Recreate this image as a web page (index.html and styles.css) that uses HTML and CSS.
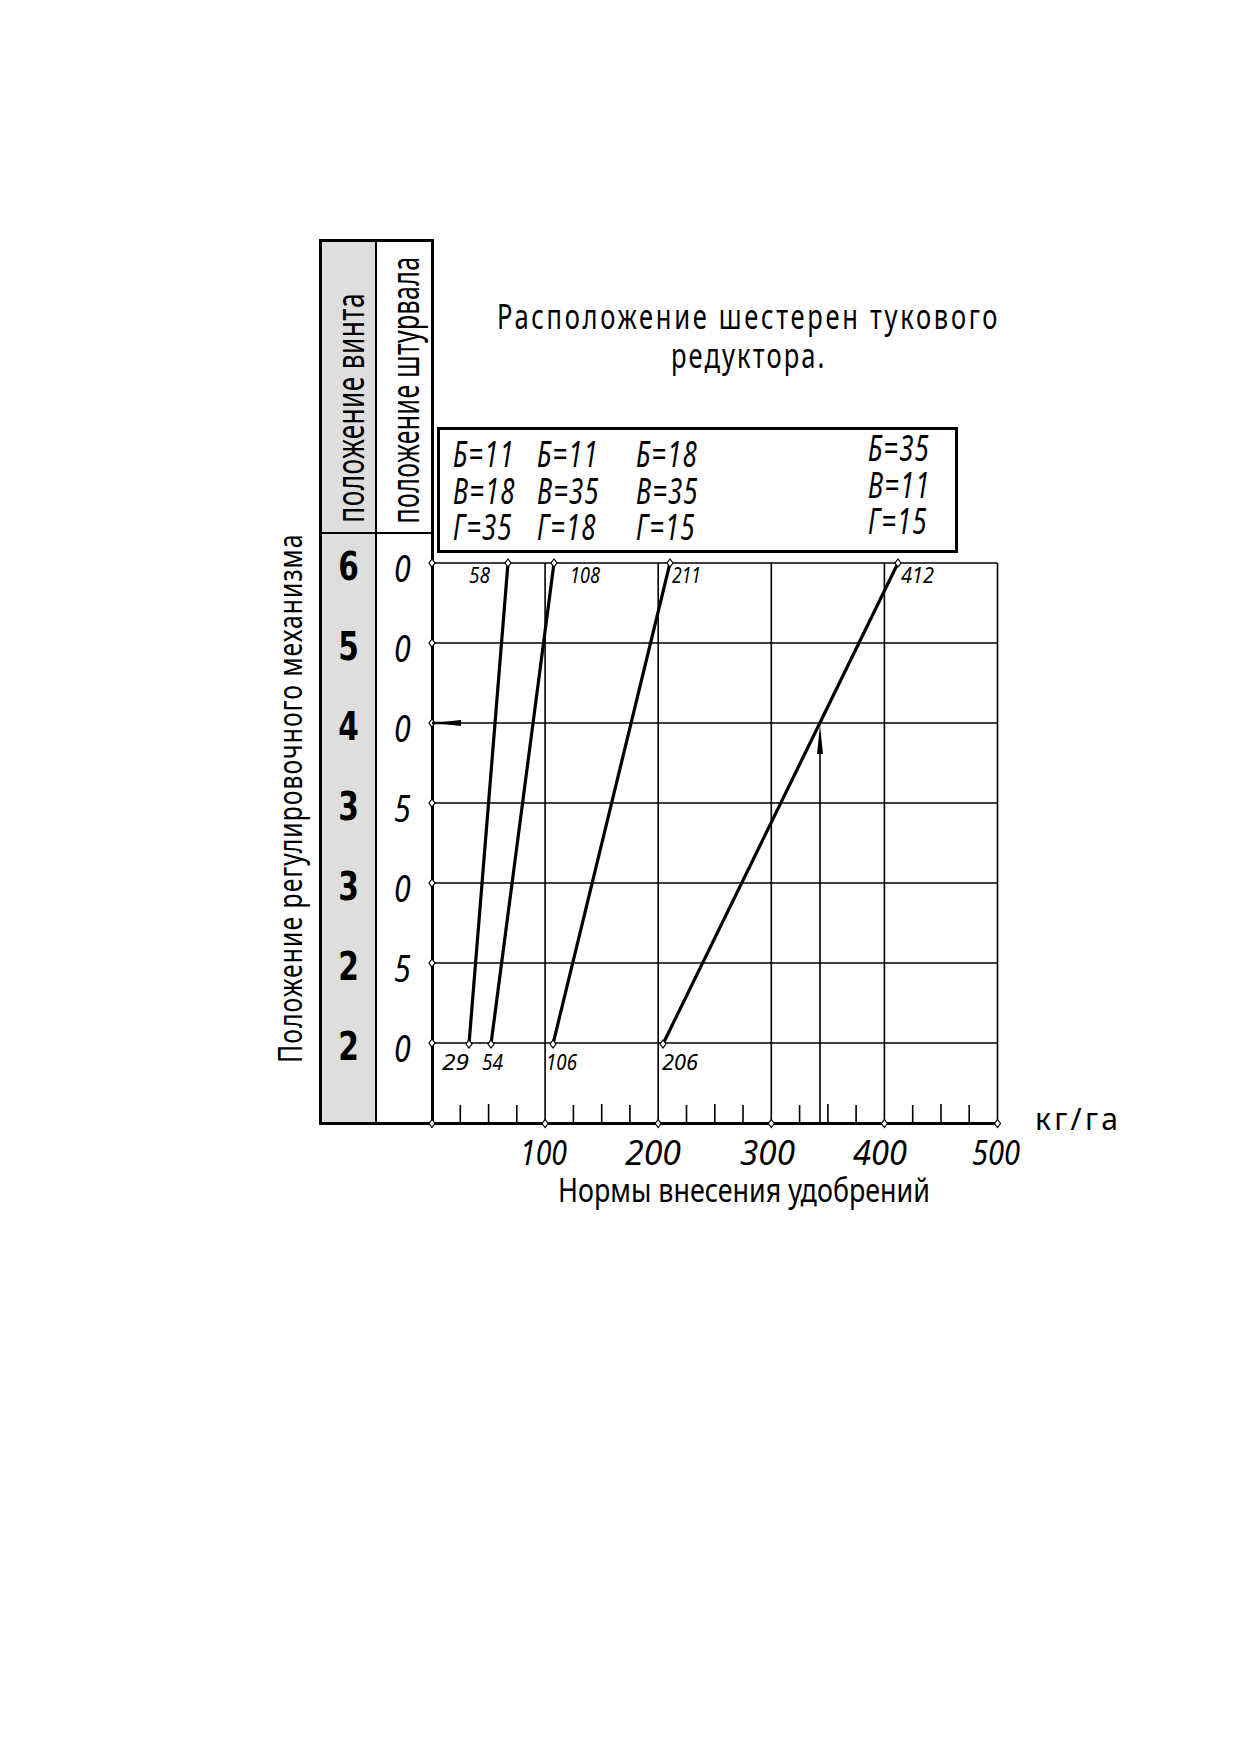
FILE: index.html
```html
<!DOCTYPE html>
<html lang="ru">
<head>
<meta charset="utf-8">
<title>Нормы внесения удобрений</title>
<link rel="stylesheet" href="styles.css">
</head>
<body>
<div class="figure">
  <div class="side"><span class="side-label"><span class="squeeze">Положение регулировочного механизма</span></span></div>
  <div class="table">
    <div class="col col-screw">
      <div class="head"><span class="vlabel"><span class="squeeze">положение винта</span></span></div>
      <div class="body">
        <div class="cell"><span>6</span></div>
        <div class="cell"><span>5</span></div>
        <div class="cell"><span>4</span></div>
        <div class="cell"><span>3</span></div>
        <div class="cell"><span>3</span></div>
        <div class="cell"><span>2</span></div>
        <div class="cell"><span>2</span></div>
      </div>
    </div>
    <div class="col col-wheel">
      <div class="head"><span class="vlabel"><span class="squeeze">положение штурвала</span></span></div>
      <div class="body">
        <div class="cell"><span>0</span></div>
        <div class="cell"><span>0</span></div>
        <div class="cell"><span>0</span></div>
        <div class="cell"><span>5</span></div>
        <div class="cell"><span>0</span></div>
        <div class="cell"><span>5</span></div>
        <div class="cell"><span>0</span></div>
      </div>
    </div>
  </div>
  <div class="chart">
    <div class="title">
      <div class="t1"><span>Расположение шестерен тукового</span></div>
      <div class="t2"><span>редуктора.</span></div>
    </div>
    <div class="gears">
      <div class="gcol g1"><div>Б=11</div><div>В=18</div><div>Г=35</div></div>
      <div class="gcol g2"><div>Б=11</div><div>В=35</div><div>Г=18</div></div>
      <div class="gcol g3"><div>Б=18</div><div>В=35</div><div>Г=15</div></div>
      <div class="gcol g4"><div>Б=35</div><div>В=11</div><div>Г=15</div></div>
    </div>
    <svg class="plot" width="700" height="670" viewBox="0 0 700 670" overflow="visible">
      <g class="grid">
        <line x1="-2" y1="10" x2="563.5" y2="10"/>
        <line x1="-2" y1="90" x2="563.5" y2="90"/>
        <line x1="-2" y1="170" x2="563.5" y2="170"/>
        <line x1="-2" y1="250" x2="563.5" y2="250"/>
        <line x1="-2" y1="330" x2="563.5" y2="330"/>
        <line x1="-2" y1="410" x2="563.5" y2="410"/>
        <line x1="-2" y1="490" x2="563.5" y2="490"/>
        <line x1="111.1" y1="10" x2="111.1" y2="570"/>
        <line x1="224.2" y1="10" x2="224.2" y2="570"/>
        <line x1="337.3" y1="10" x2="337.3" y2="570"/>
        <line x1="450.4" y1="10" x2="450.4" y2="570"/>
        <line x1="563.5" y1="10" x2="563.5" y2="570"/>
      </g>
      <g class="ticks">
        <line x1="26.3" y1="552" x2="26.3" y2="570"/>
        <line x1="54.6" y1="551" x2="54.6" y2="570"/>
        <line x1="82.8" y1="552" x2="82.8" y2="570"/>
        <line x1="139.4" y1="552" x2="139.4" y2="570"/>
        <line x1="167.7" y1="551" x2="167.7" y2="570"/>
        <line x1="195.9" y1="552" x2="195.9" y2="570"/>
        <line x1="252.5" y1="552" x2="252.5" y2="570"/>
        <line x1="280.8" y1="551" x2="280.8" y2="570"/>
        <line x1="309.0" y1="552" x2="309.0" y2="570"/>
        <line x1="365.6" y1="552" x2="365.6" y2="570"/>
        <line x1="393.9" y1="551" x2="393.9" y2="570"/>
        <line x1="422.1" y1="552" x2="422.1" y2="570"/>
        <line x1="478.7" y1="552" x2="478.7" y2="570"/>
        <line x1="507.0" y1="551" x2="507.0" y2="570"/>
        <line x1="535.2" y1="552" x2="535.2" y2="570"/>
      </g>
      <line class="axis" x1="-2" y1="570.5" x2="565" y2="570.5"/>
      <g class="rates">
        <line x1="74" y1="10" x2="35" y2="491"/>
        <line x1="120" y1="10" x2="57" y2="491"/>
        <line x1="236" y1="10" x2="119" y2="491"/>
        <line x1="464" y1="10" x2="229" y2="491"/>
      </g>
      <g class="marks">
        <path d="M-2 6l3 4l-3 4l-3-4z"/>
        <path d="M-2 86l3 4l-3 4l-3-4z"/>
        <path d="M-2 166l3 4l-3 4l-3-4z"/>
        <path d="M-2 246l3 4l-3 4l-3-4z"/>
        <path d="M-2 326l3 4l-3 4l-3-4z"/>
        <path d="M-2 406l3 4l-3 4l-3-4z"/>
        <path d="M-2 486l3 4l-3 4l-3-4z"/>
        <path d="M-2 566.5l3 4l-3 4l-3-4z"/>
        <path d="M111.1 566.5l3 4l-3 4l-3-4z"/>
        <path d="M224.2 566.5l3 4l-3 4l-3-4z"/>
        <path d="M337.3 566.5l3 4l-3 4l-3-4z"/>
        <path d="M450.4 566.5l3 4l-3 4l-3-4z"/>
        <path d="M563.5 566.5l3 4l-3 4l-3-4z"/>
        <path d="M74 6l3 4l-3 4l-3-4z"/>
        <path d="M120 6l3 4l-3 4l-3-4z"/>
        <path d="M236 6l3 4l-3 4l-3-4z"/>
        <path d="M464 6l3 4l-3 4l-3-4z"/>
        <path d="M35 487l3 4l-3 4l-3-4z"/>
        <path d="M57 487l3 4l-3 4l-3-4z"/>
        <path d="M119 487l3 4l-3 4l-3-4z"/>
        <path d="M229 487l3 4l-3 4l-3-4z"/>
      </g>
      <g class="reading">
        <line x1="386" y1="570" x2="386" y2="180"/>
        <polygon points="386,172 383,201 389,201"/>
        <line x1="-2" y1="170" x2="24" y2="170" class="shaft"/>
        <polygon points="-1,170 27,167 27,173"/>
      </g>
      <g class="val">
        <text x="35" y="30" textLength="21" lengthAdjust="spacingAndGlyphs">58</text>
        <text x="136" y="30" textLength="30" lengthAdjust="spacingAndGlyphs">108</text>
        <text x="238" y="30" textLength="29" lengthAdjust="spacingAndGlyphs">211</text>
        <text x="467" y="30" textLength="33" lengthAdjust="spacingAndGlyphs">412</text>
        <text x="8" y="517" textLength="27" lengthAdjust="spacingAndGlyphs">29</text>
        <text x="48" y="517" textLength="21" lengthAdjust="spacingAndGlyphs">54</text>
        <text x="112" y="517" textLength="31" lengthAdjust="spacingAndGlyphs">106</text>
        <text x="228" y="517" textLength="36" lengthAdjust="spacingAndGlyphs">206</text>
      </g>
      <g class="scale">
        <text x="86" y="612" textLength="47" lengthAdjust="spacingAndGlyphs">100</text>
        <text x="191" y="612" textLength="56" lengthAdjust="spacingAndGlyphs">200</text>
        <text x="306" y="612" textLength="55" lengthAdjust="spacingAndGlyphs">300</text>
        <text x="419" y="612" textLength="54" lengthAdjust="spacingAndGlyphs">400</text>
        <text x="538" y="612" textLength="48" lengthAdjust="spacingAndGlyphs">500</text>
      </g>
      <text class="unit" x="601" y="577" textLength="83" lengthAdjust="spacing">кг/га</text>
      <text class="axis-title" x="124" y="649" textLength="372" lengthAdjust="spacingAndGlyphs">Нормы внесения удобрений</text>
    </svg>
  </div>
</div>
</body>
</html>
```

FILE: styles.css
```css
html, body {
  margin: 0;
  padding: 0;
  background: #ffffff;
}

body {
  color: #000;
  font-family: "Noto Sans", "Open Sans", "DejaVu Sans", sans-serif;
  font-weight: 400;
}

.figure {
  display: flex;
  align-items: flex-start;
  margin: 239px 0 0 269px;
}

/* rotated axis caption left of the table */
.side {
  width: 50px;
  height: 886px;
  box-sizing: border-box;
  display: flex;
  justify-content: center;
  align-items: flex-end;
  padding: 0 9px 62px 0;
}

.side-label,
.vlabel {
  writing-mode: vertical-rl;
  transform: rotate(180deg);
  white-space: nowrap;
}

.squeeze {
  display: inline-block;
  transform-origin: 50% 0;
}

.side-label {
  font-size: 33px;
  line-height: 34px;
  letter-spacing: 1.4px;
}

.side-label .squeeze {
  transform: scaleY(0.75);
}

/* table of screw / wheel positions */
.table {
  display: flex;
  height: 886px;
  box-sizing: border-box;
  border: 3px solid #000;
}

.col {
  display: flex;
  flex-direction: column;
}

.col-screw {
  width: 55px;
  box-sizing: border-box;
  border-right: 2px solid #000;
  background: #dedede;
}

.col-wheel {
  width: 54px;
}

.head {
  height: 292px;
  box-sizing: border-box;
  border-bottom: 2px solid #000;
  display: flex;
  justify-content: center;
  align-items: flex-end;
  padding-bottom: 9px;
}

.vlabel {
  font-size: 38px;
  line-height: 38px;
  letter-spacing: 0.6px;
}

.vlabel .squeeze {
  transform: scaleY(0.69);
}

.col-wheel .vlabel .squeeze {
  transform: scaleY(0.655);
}

.body {
  display: flex;
  flex-direction: column;
}

.cell {
  height: 80px;
  line-height: 66px;
  text-align: center;
}

.cell span {
  display: inline-block;
}

.col-screw .cell {
  font-family: "DejaVu Sans", "Liberation Sans", sans-serif;
  font-weight: 700;
  font-size: 39px;
}

.col-screw .cell span {
  transform: scaleX(0.76);
}

.col-wheel .cell {
  font-style: italic;
  font-size: 38px;
  padding-right: 4px;
}

.col-wheel .cell span {
  transform: scaleX(0.8);
}

/* chart column */
.chart {
  display: flex;
  flex-direction: column;
  width: 700px;
}

.title {
  height: 188px;
  box-sizing: border-box;
  width: 630px;
  padding-top: 58px;
  font-size: 34px;
  line-height: 39px;
}

.t1,
.t2 {
  display: flex;
  justify-content: center;
  white-space: nowrap;
}

.t1 span,
.t2 span {
  display: inline-block;
  transform: scaleX(0.75);
}

.t1 span {
  letter-spacing: 3.6px;
}

.t2 span {
  letter-spacing: 2.8px;
}

.gears {
  margin-left: 3px;
  width: 521px;
  height: 126px;
  box-sizing: border-box;
  border: 3px solid #000;
  display: flex;
  padding: 6px 0 0 13px;
  font-style: italic;
  font-size: 36px;
  line-height: 36.5px;
  white-space: nowrap;
}

.gcol {
  transform: scaleX(0.72);
  transform-origin: 0 0;
  letter-spacing: 1.4px;
}

.g1 { width: 84px; }
.g2 { width: 99px; }
.g3 { width: 232px; }
.g4 { margin-top: -6px; }

.plot {
  display: block;
  overflow: visible;
}

.grid line,
.ticks line {
  stroke: #000;
  stroke-width: 1.6;
}

.axis {
  stroke: #000;
  stroke-width: 3;
}

.rates line {
  stroke: #000;
  stroke-width: 3.2;
  stroke-linecap: round;
}

.marks path {
  fill: #fff;
  stroke: #000;
  stroke-width: 1.2;
}

.reading line {
  stroke: #000;
  stroke-width: 1.6;
}

.reading line.shaft {
  stroke-width: 2.5;
}

.reading polygon {
  fill: #000;
}

.plot text {
  fill: #000;
  font-family: "Noto Sans", "Open Sans", "DejaVu Sans", sans-serif;
}

.val text {
  font-style: italic;
  font-size: 22px;
}

.scale text {
  font-style: italic;
  font-size: 35px;
}

.unit {
  font-size: 30px;
}

.axis-title {
  font-size: 32px;
}
```
